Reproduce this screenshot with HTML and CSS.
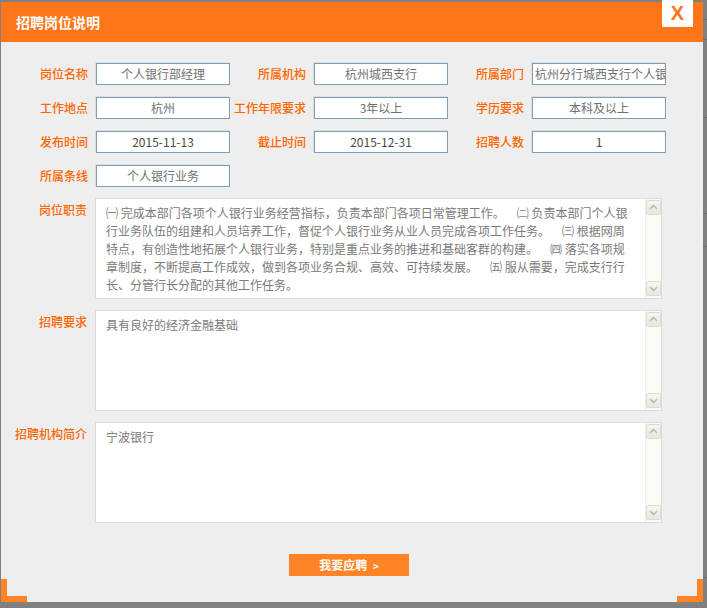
FILE: index.html
```html
<!DOCTYPE html>
<html lang="zh-CN">
<head>
<meta charset="utf-8">
<title>招聘岗位说明</title>
<link rel="stylesheet" href="styles.css">
</head>
<body>
<div class="dialog">
  <div class="header"><h1 class="title">招聘岗位说明</h1></div>
  <a class="close">X</a>
  <div class="body">
    <div class="grid">
      <span class="lbl">岗位名称</span><span class="field">个人银行部经理</span>
      <span class="lbl">所属机构</span><span class="field">杭州城西支行</span>
      <span class="lbl">所属部门</span><span class="field">杭州分行城西支行个人银行部</span>
      <span class="lbl">工作地点</span><span class="field">杭州</span>
      <span class="lbl">工作年限要求</span><span class="field">3年以上</span>
      <span class="lbl">学历要求</span><span class="field">本科及以上</span>
      <span class="lbl">发布时间</span><span class="field num">2015-11-13</span>
      <span class="lbl">截止时间</span><span class="field num">2015-12-31</span>
      <span class="lbl">招聘人数</span><span class="field num">1</span>
      <span class="lbl">所属条线</span><span class="field">个人银行业务</span>
    </div>

    <div class="area-row">
      <span class="lbl area-lbl">岗位职责</span>
      <div class="area">
        <div class="area-text">㈠ 完成本部门各项个人银行业务经营指标，负责本部门各项日常管理工作。　㈡ 负责本部门个人银<br>行业务队伍的组建和人员培养工作，督促个人银行业务从业人员完成各项工作任务。　㈢ 根据网周<br>特点，有创造性地拓展个人银行业务，特别是重点业务的推进和基础客群的构建。　㈣ 落实各项规<br>章制度，不断提高工作成效，做到各项业务合规、高效、可持续发展。　㈤ 服从需要，完成支行行<br>长、分管行长分配的其他工作任务。</div>
        <div class="scrollbar">
          <span class="sb-btn"><svg viewBox="0 0 13 13" width="13" height="13"><polyline points="3,8 6.5,4.5 10,8" /></svg></span>
          <span class="sb-btn"><svg viewBox="0 0 13 13" width="13" height="13"><polyline points="3,5 6.5,8.5 10,5" /></svg></span>
        </div>
      </div>
    </div>

    <div class="area-row">
      <span class="lbl area-lbl">招聘要求</span>
      <div class="area">
        <div class="area-text">具有良好的经济金融基础</div>
        <div class="scrollbar">
          <span class="sb-btn"><svg viewBox="0 0 13 13" width="13" height="13"><polyline points="3,8 6.5,4.5 10,8" /></svg></span>
          <span class="sb-btn"><svg viewBox="0 0 13 13" width="13" height="13"><polyline points="3,5 6.5,8.5 10,5" /></svg></span>
        </div>
      </div>
    </div>

    <div class="area-row">
      <span class="lbl area-lbl">招聘机构简介</span>
      <div class="area">
        <div class="area-text">宁波银行</div>
        <div class="scrollbar">
          <span class="sb-btn"><svg viewBox="0 0 13 13" width="13" height="13"><polyline points="3,8 6.5,4.5 10,8" /></svg></span>
          <span class="sb-btn"><svg viewBox="0 0 13 13" width="13" height="13"><polyline points="3,5 6.5,8.5 10,5" /></svg></span>
        </div>
      </div>
    </div>

    <div class="actions"><button class="apply" type="button">我要应聘 <span class="chev">&gt;</span></button></div>
  </div>
  <span class="corner corner-bl"></span>
  <span class="corner corner-br"></span>
</div>
</body>
</html>
```

FILE: styles.css
```css
html, body {
  margin: 0;
  padding: 0;
}

body {
  width: 707px;
  height: 608px;
  overflow: hidden;
  font-family: "Noto Sans CJK SC", "Noto Sans", sans-serif;
  font-size: 12px;
  text-spacing-trim: space-all;
  background-color: #808080;
  background-image:
    linear-gradient(#6b6b6b, #6b6b6b),
    linear-gradient(#6b6b6b, #6b6b6b),
    linear-gradient(#6b6b6b, #6b6b6b),
    linear-gradient(#6b6b6b, #6b6b6b),
    linear-gradient(#6b6b6b, #6b6b6b),
    linear-gradient(#6b6b6b, #6b6b6b);
  background-repeat: no-repeat;
  background-size: 4px 1px;
  background-position:
    703px 19px,
    703px 39px,
    703px 117px,
    703px 213px,
    703px 246px,
    703px 577px;
}

.dialog {
  position: relative;
  margin: 2px 0 0 1px;
  width: 702px;
  height: 600px;
  background: #eeeeee;
}

.header {
  height: 40px;
  background: #ff761a;
  padding-left: 15px;
  display: flex;
  align-items: center;
}

.title {
  margin: 0;
  font-size: 14px;
  font-weight: bold;
  color: #ffffff;
  line-height: 16px;
}

.close {
  position: absolute;
  top: -2px;
  left: 661px;
  width: 31px;
  height: 27px;
  background: #ffffff;
  color: #ff761a;
  font-family: "Liberation Sans", Arial, sans-serif;
  font-weight: bold;
  font-size: 20px;
  line-height: 27px;
  text-align: center;
}

.body {
  padding: 21px 17px 0 11px;
}

.grid {
  display: grid;
  grid-template-columns: 84px 134px 84px 134px 84px 134px;
  grid-auto-rows: 22px;
  row-gap: 12px;
}

.lbl {
  color: #ff6600;
  font-weight: 500;
  text-align: right;
  padding-right: 8px;
  line-height: 22px;
  white-space: nowrap;
}

.field {
  box-sizing: border-box;
  height: 22px;
  border: 1px solid #7f9db9;
  background: #ffffff;
  box-shadow: -1px -1px 0 #dedede;
  color: #707070;
  line-height: 20px;
  text-align: center;
  white-space: nowrap;
  overflow: hidden;
  padding: 0 2px;
}

.field.num {
  color: #4a4a4a;
}

.area-row {
  display: flex;
  margin-top: 11px;
}

.area-lbl {
  width: 83px;
  box-sizing: border-box;
  padding-top: 4px;
  line-height: 16px;
}

.area {
  box-sizing: border-box;
  width: 567px;
  height: 101px;
  border: 1px solid #dcdcdc;
  background: #ffffff;
  display: flex;
}

.area-text {
  width: 528px;
  padding: 5px 12px 0 10px;
  line-height: 18px;
  color: #7a7a7a;
  white-space: nowrap;
}

.scrollbar {
  width: 16px;
  box-sizing: border-box;
  background: #fbfbf5;
  border-left: 1px solid #eeeee6;
  display: flex;
  flex-direction: column;
  justify-content: space-between;
  align-items: center;
  padding: 1px 0 2px;
}

.sb-btn {
  box-sizing: border-box;
  width: 15px;
  height: 15px;
  border: 1px solid #dcdcd2;
  border-radius: 2px;
  background: linear-gradient(#f6f6f0, #e8e8de);
  display: flex;
  align-items: center;
  justify-content: center;
}

.sb-btn polyline {
  fill: none;
  stroke: #b9b9b0;
  stroke-width: 1.6;
}

.actions {
  display: flex;
  justify-content: center;
  margin-top: 31px;
}

.apply {
  width: 120px;
  height: 22px;
  border: 0;
  padding: 0;
  background: #ff8427;
  color: #ffffff;
  font-family: "Noto Sans CJK SC", sans-serif;
  font-size: 12px;
  font-weight: bold;
  line-height: 22px;
}

.chev {
  font-size: 10px;
  margin-left: 3px;
}

.corner {
  position: absolute;
  bottom: 0;
  width: 26px;
  height: 23px;
  box-sizing: border-box;
  border-bottom: 6px solid #ff8427;
}

.corner-bl {
  left: 0;
  border-left: 6px solid #ff8427;
}

.corner-br {
  right: 0;
  border-right: 6px solid #ff8427;
}
```
